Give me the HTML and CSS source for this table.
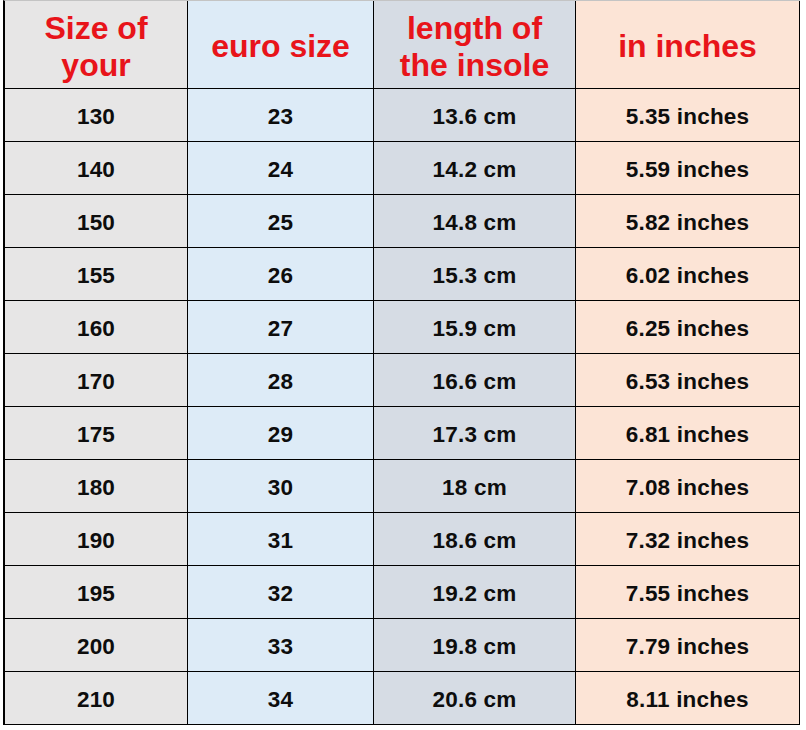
FILE: index.html
```html
<!DOCTYPE html>
<html lang="en">
<head>
<meta charset="utf-8">
<title>Size chart</title>
<link rel="stylesheet" href="styles.css">
</head>
<body>
<div class="sheet">
  <div class="chart">
    <div class="cell c1 head">Size of<br>your</div>
    <div class="cell c2 head">euro size</div>
    <div class="cell c3 head">length of<br>the insole</div>
    <div class="cell c4 head">in inches</div>

    <div class="cell c1">130</div><div class="cell c2">23</div><div class="cell c3">13.6 cm</div><div class="cell c4">5.35 inches</div>
    <div class="cell c1">140</div><div class="cell c2">24</div><div class="cell c3">14.2 cm</div><div class="cell c4">5.59 inches</div>
    <div class="cell c1">150</div><div class="cell c2">25</div><div class="cell c3">14.8 cm</div><div class="cell c4">5.82 inches</div>
    <div class="cell c1">155</div><div class="cell c2">26</div><div class="cell c3">15.3 cm</div><div class="cell c4">6.02 inches</div>
    <div class="cell c1">160</div><div class="cell c2">27</div><div class="cell c3">15.9 cm</div><div class="cell c4">6.25 inches</div>
    <div class="cell c1">170</div><div class="cell c2">28</div><div class="cell c3">16.6 cm</div><div class="cell c4">6.53 inches</div>
    <div class="cell c1">175</div><div class="cell c2">29</div><div class="cell c3">17.3 cm</div><div class="cell c4">6.81 inches</div>
    <div class="cell c1">180</div><div class="cell c2">30</div><div class="cell c3">18 cm</div><div class="cell c4">7.08 inches</div>
    <div class="cell c1">190</div><div class="cell c2">31</div><div class="cell c3">18.6 cm</div><div class="cell c4">7.32 inches</div>
    <div class="cell c1">195</div><div class="cell c2">32</div><div class="cell c3">19.2 cm</div><div class="cell c4">7.55 inches</div>
    <div class="cell c1">200</div><div class="cell c2">33</div><div class="cell c3">19.8 cm</div><div class="cell c4">7.79 inches</div>
    <div class="cell c1">210</div><div class="cell c2">34</div><div class="cell c3">20.6 cm</div><div class="cell c4">8.11 inches</div>
  </div>
</div>
</body>
</html>
```

FILE: styles.css
```css
html, body {
  margin: 0;
  padding: 0;
  background: #ffffff;
}

.sheet {
  width: 806px;
  height: 730px;
  padding-left: 3px;
  box-sizing: border-box;
  overflow: hidden;
}

.chart {
  display: grid;
  grid-template-columns: 182px 185px 201px 223px;
  grid-template-rows: 87px repeat(12, 52px);
  gap: 1px;
  width: max-content;
  background: #000000;
  border-left: 2px solid #000000;
  border-top: 1px solid #c4c4c4;
  padding: 0 1px 1px 0;
  font-family: "Liberation Sans", Arial, sans-serif;
}

.cell {
  display: flex;
  align-items: center;
  justify-content: center;
  text-align: center;
  font-weight: bold;
  font-size: 22.5px;
  letter-spacing: 0.2px;
  color: #0d0d0d;
  padding-top: 3px;
  box-sizing: border-box;
}

.head {
  font-size: 32px;
  line-height: 37px;
  letter-spacing: 0;
  color: #e8141a;
  padding-top: 4px;
}

.c1 { background: #e7e6e6; }
.c2 { background: #ddebf7; }
.c3 { background: #d6dce4; }
.c4 { background: #fce4d6; }
```
